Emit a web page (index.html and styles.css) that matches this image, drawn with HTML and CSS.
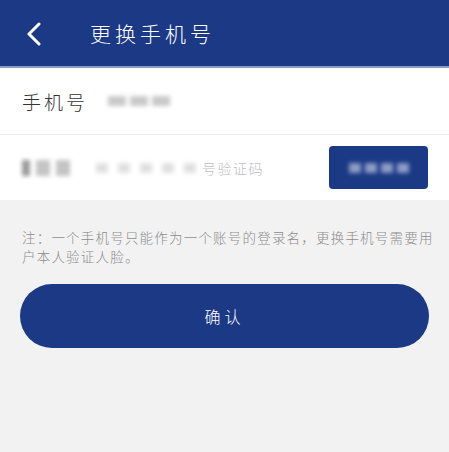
FILE: index.html
```html
<!DOCTYPE html>
<html lang="zh-CN">
<head>
    <meta charset="UTF-8">
    <meta name="viewport" content="width=device-width, initial-scale=1.0">
    <title>更换手机号</title>
    <link rel="stylesheet" href="styles.css">
</head>
<body>
<header class="topbar">
    <span class="back">
        <svg width="16" height="24" viewBox="0 0 16 24"><path d="M13 2 L3 12 L13 22" fill="none" stroke="#fff" stroke-width="3" stroke-linecap="round" stroke-linejoin="round"/></svg>
    </span>
    <h1 class="title">更换手机号</h1>
</header>

<section class="form">
    <div class="row">
        <span class="label">手机号</span>
        <span class="masked phone"><i></i><i></i><i></i></span>
    </div>
    <div class="row">
        <span class="masked code-label"><i></i><i></i><i></i></span>
        <span class="masked code-hint"><i></i><i></i><i></i><i></i><i></i></span>
        <span class="placeholder">号验证码</span>
        <button class="send-btn"><span class="masked light"><i></i><i></i><i></i><i></i></span></button>
    </div>
</section>

<p class="note">注：一个手机号只能作为一个账号的登录名，更换手机号需要用户本人验证人脸。</p>

<div class="actions">
    <button class="confirm">确认</button>
</div>
</body>
</html>
```

FILE: styles.css
```css
body {
    margin: 0;
    background-color: #f2f2f2;
    font-family: "Noto Sans CJK SC", "Noto Sans", sans-serif;
}

.topbar {
    height: 66px;
    background-color: #1b3985;
    border-bottom: 2px solid #8a9cc4;
    display: flex;
    align-items: center;
    padding-left: 26px;
}

.back {
    display: flex;
    width: 16px;
    margin-top: 2px;
}

.title {
    margin: 0 0 0 48px;
    font-size: 21px;
    font-weight: 300;
    color: #fff;
    letter-spacing: 4px;
}

.form {
    background-color: #fff;
}

.row {
    height: 66px;
    display: flex;
    align-items: center;
    padding: 0 22px;
}

.row + .row {
    border-top: 1px solid #eeeeee;
    height: 65px;
}

.label {
    font-size: 19px;
    font-weight: 300;
    color: #333;
    letter-spacing: 3px;
}

/* blurred blocks for hidden values */
.masked {
    display: flex;
    gap: 4px;
    filter: blur(2px);
}

.masked i {
    display: block;
    width: 18px;
    height: 10px;
    background-color: #c9c9c9;
}

.phone {
    margin-left: 20px;
}

.code-label {
    gap: 6px;
}

.code-label i {
    width: 14px;
    height: 16px;
    background-color: #c4c4c4;
}

.code-label i:first-child {
    width: 8px;
    background-color: #9a9a9a;
}

.code-hint {
    margin-left: 26px;
    gap: 10px;
}

.code-hint i {
    width: 12px;
    background-color: #e0e0e0;
}

.placeholder {
    margin-left: 6px;
    font-size: 14px;
    font-weight: 300;
    color: #bdbdbd;
    letter-spacing: 1.5px;
}

.send-btn {
    margin-left: auto;
    margin-right: -1px;
    width: 99px;
    height: 43px;
    border: none;
    border-radius: 4px;
    background-color: #1b3985;
    display: flex;
    align-items: center;
    justify-content: center;
}

.masked.light i {
    width: 12px;
    background-color: #8c9cc6;
}

.note {
    margin: 28px 12px 0 22px;
    font-size: 13.5px;
    font-weight: 300;
    line-height: 19px;
    color: #8c8c8c;
    letter-spacing: 1.2px;
}

.actions {
    padding: 18px 20px 0 20px;
}

.confirm {
    width: 100%;
    height: 64px;
    border: none;
    border-radius: 32px;
    background-color: #1b3985;
    color: #fff;
    font-family: inherit;
    font-size: 16px;
    font-weight: 300;
    letter-spacing: 4px;
}
```
